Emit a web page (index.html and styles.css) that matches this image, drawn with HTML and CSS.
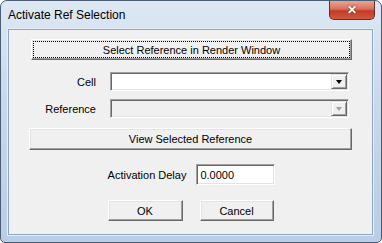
FILE: index.html
```html
<!DOCTYPE html>
<html lang="en">
<head>
    <meta charset="UTF-8">
    <meta name="viewport" content="width=device-width, initial-scale=1.0">
    <title>Activate Ref Selection</title>
    <link rel="stylesheet" href="styles.css">
</head>
<body>
    <div class="window">
        <div class="titlebar">
            <span class="title">Activate Ref Selection</span>
            <div class="close">&#x2715;</div>
        </div>
        <div class="client">
            <button class="btn focused" type="button">Select Reference in Render Window</button>
            <div class="fields">
                <label class="field-label">Cell</label>
                <div class="combo">
                    <span class="combo-text"></span>
                    <span class="combo-arrow"><i class="tri"></i></span>
                </div>
                <label class="field-label">Reference</label>
                <div class="combo disabled">
                    <span class="combo-text"></span>
                    <span class="combo-arrow"><i class="tri"></i></span>
                </div>
            </div>
            <button class="btn wide" type="button">View Selected Reference</button>
            <div class="delay-row">
                <label for="delay">Activation Delay</label>
                <input id="delay" class="text-input" type="text" value="0.0000">
            </div>
            <div class="actions">
                <button class="btn small" type="button">OK</button>
                <button class="btn small cancel" type="button">Cancel</button>
            </div>
        </div>
    </div>
</body>
</html>
```

FILE: styles.css
```css
html, body { margin: 0; padding: 0; background: #ffffff; }
body { font-family: "Liberation Sans", Arial, sans-serif; font-size: 11px; color: #000; }

.window {
    width: 382px; height: 243px; box-sizing: border-box;
    border: 1px solid #4a5d74; border-radius: 7px 7px 5px 5px;
    background: linear-gradient(180deg, #dde8f4 0%, #c9d9ec 40%, #b9cde6 100%);
    display: flex; flex-direction: column;
}
.titlebar { height: 28px; display: flex; align-items: flex-start; }
.title { padding: 7px 0 0 7px; font-size: 12px; line-height: 15px; color: #000; }
.close {
    margin-left: auto; margin-right: 6px; width: 46px; height: 19px; box-sizing: border-box;
    border: 1px solid #6e2b22; border-top: none; border-radius: 0 0 5px 5px;
    background: linear-gradient(180deg, #e9a593 0%, #d8705a 45%, #c23c24 55%, #d0593f 100%);
    color: #fff; font-weight: bold; font-size: 12px; line-height: 18px; text-align: center;
    text-shadow: 0 0 2px #5a1a10;
}

.client {
    margin: 0 8px 0 7px; height: 206px; box-sizing: border-box;
    border: 1px solid #8fa6c2; box-shadow: 0 0 0 1px #e6eef8;
    background: #f0f0f0; padding: 9px 20px 0 22px;
    display: flex; flex-direction: column;
}

.btn {
    font-family: inherit; font-size: 11px; color: #000; background: #f0f0f0;
    box-sizing: border-box; height: 21px; padding: 0;
    border: 1px solid; border-color: #ffffff #696969 #696969 #ffffff;
    box-shadow: inset -1px -1px #a0a0a0, inset 1px 1px #e3e3e3;
}
.btn.focused { outline: 1px dotted #000; outline-offset: -3px; }
.btn.wide { margin: 10px 0 0 -2px; width: 323px; height: 22px; }

.fields {
    display: grid; grid-template-columns: 65px 239px; column-gap: 14px; row-gap: 8px;
    margin-top: 12px; align-items: center;
}
.field-label { text-align: right; }
.combo {
    height: 19px; box-sizing: border-box; background: #fff; display: flex; justify-content: flex-end;
    border: 1px solid; border-color: #a0a0a0 #ffffff #ffffff #a0a0a0;
    box-shadow: inset 1px 1px #696969, inset -1px -1px #e3e3e3; padding: 1px;
}
.combo.disabled { background: #f0f0f0; }
.combo-text { flex: 1; }
.combo-arrow {
    width: 16px; height: 15px; box-sizing: border-box; background: #f0f0f0;
    border: 1px solid; border-color: #e3e3e3 #696969 #696969 #e3e3e3;
    box-shadow: inset 1px 1px #fff, inset -1px -1px #a0a0a0;
    display: flex; align-items: center; justify-content: center;
}
.tri { width: 0; height: 0; border-left: 3.5px solid transparent; border-right: 3.5px solid transparent; border-top: 4px solid #000; }
.combo.disabled .tri { border-top-color: #a0a0a0; }

.delay-row { display: flex; justify-content: center; align-items: center; gap: 10px; margin-top: 14px; }
.text-input {
    width: 79px; height: 21px; box-sizing: border-box; padding: 0 0 0 3px;
    font-family: inherit; font-size: 11px; color: #000; background: #fff;
    border: 1px solid; border-color: #a0a0a0 #ffffff #ffffff #a0a0a0;
    box-shadow: inset 1px 1px #696969, inset -1px -1px #e3e3e3;
}

.actions { display: flex; justify-content: center; gap: 17px; margin-top: 15px; margin-left: -2px; }
.btn.small { width: 75px; }
.btn.cancel { width: 74px; }
```
